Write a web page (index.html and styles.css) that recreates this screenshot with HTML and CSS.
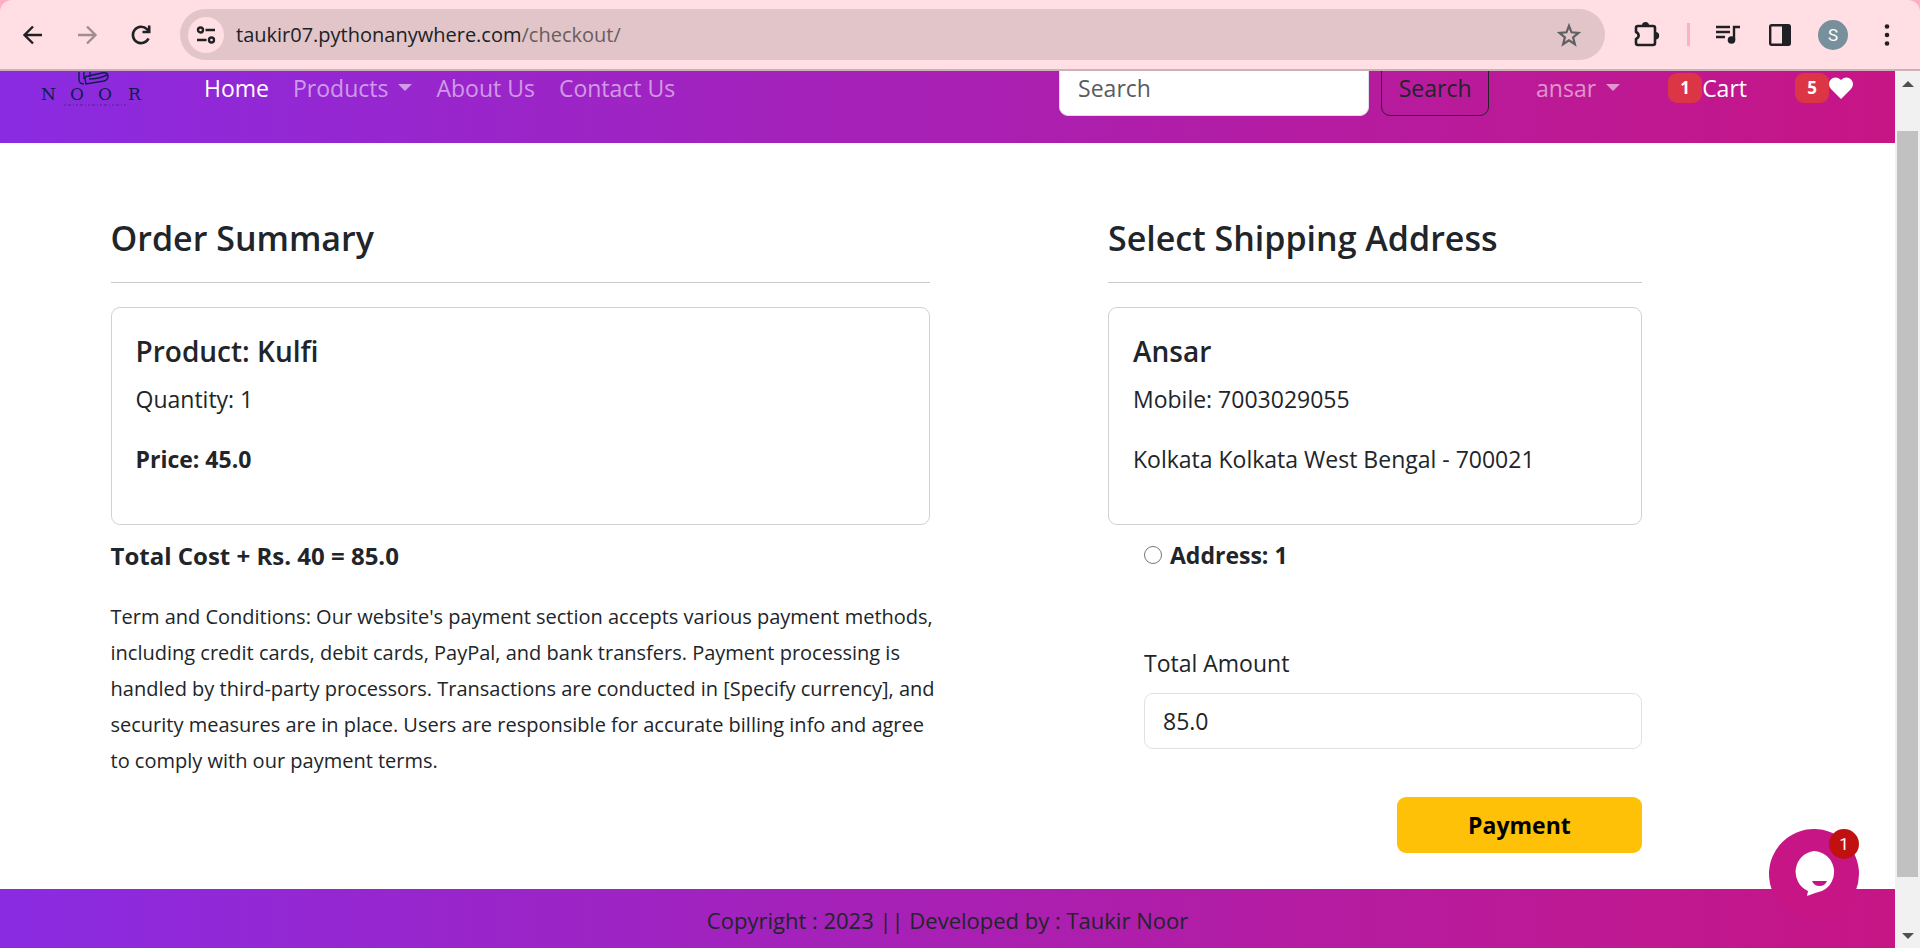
FILE: index.html
```html
<!DOCTYPE html>
<html lang="en">
<head>
<meta charset="utf-8">
<title>Checkout</title>
<link rel="stylesheet" href="styles.css">
</head>
<body>
<div class="browser">
  <header class="toolbar">
    <div class="toolbar-inner">
      <div class="nav-buttons">
        <button class="tool" aria-label="Back"><svg width="24" height="24" viewBox="0 0 24 24" fill="none" stroke="#202124" stroke-width="2.4"><path d="M21 12H4M12 3.500L3.500 12l8.500 8.500"/></svg></button>
        <button class="tool" aria-label="Forward"><svg width="24" height="24" viewBox="0 0 24 24" fill="none" stroke="#a08d92" stroke-width="2.400"><path d="M3 12h17M12 3.500l8.500 8.500-8.500 8.500"/></svg></button>
        <button class="tool" aria-label="Reload"><svg width="24" height="24" viewBox="0 0 24 24" fill="none" stroke="#202124" stroke-width="2.600"><path d="M19.500 15.500A8.200 8.200 0 1 1 18 6.200l2.200 2.600"/><path d="M20.200 2.500V9h-6.700"/></svg></button>
      </div>
      <div class="omnibox">
        <button class="site-info" aria-label="Site information"><svg width="20" height="20" viewBox="0 0 20 20" fill="none" stroke="#202124" stroke-width="2.400"><circle cx="4.500" cy="5" r="2.500"/><path d="M9.500 5H19M1 15h9.500"/><circle cx="15.500" cy="15" r="2.500"/></svg></button>
        <div class="url">taukir07.pythonanywhere.com<span class="path">/checkout/</span></div>
        <button class="tool" aria-label="Bookmark"><svg width="24" height="24" viewBox="0 0 24 24" fill="none" stroke="#5f6063" stroke-width="2.200"><path d="M12 2.800l2.500 6.500 7 .5-5.400 4.500 1.800 6.900L12 17.400l-5.900 3.800 1.800-6.900L2.500 9.800l7-.5z"/></svg></button>
      </div>
      <div class="actions">
        <button class="tool" aria-label="Extensions"><svg width="28" height="28" viewBox="0 0 28 28"><path d="M3 7q0-2 2-2h15q2 0 2 2v15q0 2-2 2H5q-2 0-2-2v-4c3.500-1.500 3.500-5.500 0-7z" fill="none" stroke="#202124" stroke-width="2.600" stroke-linejoin="round"/><path d="M9 4.500a3.500 3.500 0 0 1 7 0zM22.500 11a3.700 3.700 0 0 1 0 7.400z" fill="#202124"/></svg></button>
        <span class="divider"></span>
        <button class="tool" aria-label="Media"><svg width="26" height="24" viewBox="0 0 26 24" fill="none" stroke="#202124" stroke-width="2.400"><path d="M0 4h14M0 9h14M0 14h9M24 4h-6v13"/><circle cx="15.500" cy="17" r="3.800" fill="#202124" stroke="none"/></svg></button>
        <button class="tool" aria-label="Side panel"><svg width="24" height="24" viewBox="0 0 24 24"><rect x="2.200" y="2.200" width="19.600" height="19.600" rx="1.500" fill="none" stroke="#202124" stroke-width="2.400"/><path d="M14 2h8v20h-8z" fill="#202124"/></svg></button>
        <button class="avatar">S</button>
        <button class="tool" aria-label="Menu"><svg width="6" height="24" viewBox="0 0 6 24" fill="#202124"><circle cx="3" cy="3.500" r="2.300"/><circle cx="3" cy="12" r="2.300"/><circle cx="3" cy="20.500" r="2.300"/></svg></button>
      </div>
    </div>
  </header>
  <div class="viewport">
    <div class="page">
      <nav class="navbar">
        <a class="brand" href="#" aria-label="Noor">
          <svg width="120" height="40" viewBox="0 0 120 40">
            <path d="M43 -2v9q0 5 5 5M48 -2v9M54 -2v7M49 7q0-3 3-3l14-3q6-1 6 3t-4 5l-18 3zM53 7q10 0 18-4" fill="none" stroke="#0b1f4d" stroke-width="1.400"/>
            <text class="logo-name" x="5 34 62 92" y="28">NOOR</text>
            <path d="M28 33h62" stroke="#0b1f4d" stroke-opacity=".5" stroke-dasharray="2 2 3 2 1 2"/>
          </svg>
        </a>
        <ul class="links">
          <li><a class="active" href="#">Home</a></li>
          <li><a class="caret" href="#">Products</a></li>
          <li><a href="#">About Us</a></li>
          <li><a href="#">Contact Us</a></li>
        </ul>
        <form class="search">
          <input type="search" placeholder="Search" aria-label="Search">
          <button type="button">Search</button>
        </form>
        <ul class="account">
          <li><a class="caret" href="#">ansar</a></li>
          <li><a class="active" href="#"><span class="count">1</span>Cart</a></li>
          <li><a class="active" href="#" aria-label="Wishlist"><span class="count">5</span><svg width="24" height="22" viewBox="0 0 24 22" fill="#fff"><path d="M12 22L2 12C-4 5 5-4 12 3 19-4 28 5 22 12z"/></svg></a></li>
        </ul>
      </nav>
      <main class="checkout">
        <section class="summary">
          <h1>Order Summary</h1>
          <hr>
          <div class="card">
            <h2>Product: Kulfi</h2>
            <p>Quantity: 1</p>
            <p><strong>Price: 45.0</strong></p>
          </div>
          <p class="total">Total Cost + Rs. 40 = 85.0</p>
          <p class="terms">Term and Conditions: Our website's payment section accepts various payment methods, including credit cards, debit cards, PayPal, and bank transfers. Payment processing is handled by third-party processors. Transactions are conducted in [Specify currency], and security measures are in place. Users are responsible for accurate billing info and agree to comply with our payment terms.</p>
        </section>
        <section class="shipping">
          <h1>Select Shipping Address</h1>
          <hr>
          <form>
            <div class="card">
              <h2>Ansar</h2>
              <p>Mobile: 7003029055</p>
              <p>Kolkata Kolkata West Bengal - 700021</p>
            </div>
            <div class="fields">
              <div class="choice"><input type="radio" id="address" name="address"><label for="address">Address: 1</label></div>
              <label class="amount-label" for="amount">Total Amount</label>
              <input class="amount" id="amount" type="text" value="85.0">
              <button class="pay" type="button">Payment</button>
            </div>
          </form>
        </section>
      </main>
      <footer class="footer">Copyright : 2023 || Developed by : Taukir Noor</footer>
      <button class="chat" aria-label="Open chat">
        <svg width="44" height="48" viewBox="0 0 44 48"><path d="M22 1a21 21 0 0 1 8 40q-8 2-15 5l1-5A21 21 0 0 1 22 1z" fill="#fff"/><path d="M20 31h15q-2 5-7.500 5T20 31z" fill="#c71585"/></svg>
        <span class="chat-count">1</span>
      </button>
    </div>
    <div class="scrollbar"><span class="arrow-up"></span><span class="thumb"></span><span class="arrow-down"></span></div>
  </div>
</div>
</body>
</html>
```
FILE: styles.css
```css
* { box-sizing: border-box; }
body { margin: 0; font: 23px/36px "Open Sans", "Noto Sans", sans-serif; color: #212529; background: #fff; }
button, input { font: inherit; color: inherit; }
button { border: 0; padding: 0; background: none; }
a { color: inherit; text-decoration: none; }
ul { display: flex; list-style: none; margin: 0; padding: 0; }
svg { display: block; flex: none; }

/* Browser toolbar */
.browser { display: flex; flex-direction: column; min-height: 100vh; }
.toolbar { flex: none; background: #ffb0c0; }
.toolbar-inner { display: flex; align-items: center; height: 71px; padding: 0 30px 0 21px; background: #ffdfe4; border-bottom: 2px solid #cbb2ba; border-radius: 12px 12px 0 0; }
.nav-buttons { display: flex; gap: 30px; margin-right: 27px; }
.omnibox { flex: 1; display: flex; align-items: center; height: 51px; padding: 0 24px 0 8px; border-radius: 26px; background: #e1c5c9; }
.site-info { display: grid; place-items: center; width: 36px; height: 36px; border-radius: 50%; background: #ffdfe4; margin-right: 12px; }
.url { flex: 1; font-size: 20px; color: #202124; }
.path { color: #6a5d60; }
.actions { display: flex; align-items: center; margin-left: 28px; gap: 26px; }
.divider { width: 3px; height: 23px; background: #ffb0c0; }
.avatar { width: 30px; height: 30px; margin-right: 10px; border-radius: 50%; background: #78909c; color: #fff; font: 17px/30px Roboto, sans-serif; }
.viewport { flex: 1; display: flex; }
.page { flex: 1; display: flex; flex-direction: column; position: relative; overflow: hidden; }

/* Site navigation */
.navbar, .footer { background: linear-gradient(to right, #8a2be2, #c71585); }
.navbar { display: flex; align-items: flex-end; height: 72px; padding: 0 42px 27px 36px; overflow: hidden; color: #fff; }
.brand { margin-right: 48px; }
.brand svg { margin-bottom: 4px; }
.logo-name { font: 17px "DejaVu Serif", serif; fill: #0b1f4d; }
.navbar li { display: flex; align-items: center; height: 56px; }
.navbar a { color: rgba(255, 255, 255, .55); }
.navbar a.active { display: flex; align-items: center; color: #fff; }
.links { gap: 24px; margin-right: auto; }
.caret::after { content: ""; display: inline-block; margin-left: 10px; vertical-align: 6px; border: 7px solid transparent; border-top-color: currentColor; border-bottom: 0; }
.search { display: flex; gap: 12px; }
.search input { width: 310px; height: 56px; border: 1px solid #dee2e6; border-radius: 9px; padding: 0 18px; background: #fff; }
.search input::placeholder { color: #595c5f; opacity: 1; }
.search button { width: 108px; height: 56px; border: 1px solid #212529; border-radius: 9px; color: #212529; }
.account { gap: 48px; margin-left: 47px; }
.count { display: inline-block; width: 34px; height: 30px; border-radius: 9px; background: #dc3545; font-size: 17px; line-height: 30px; font-weight: 700; text-align: center; }

/* Checkout */
.checkout { flex: 1; display: flex; width: 100%; max-width: 1710px; margin: 0 auto; padding-top: 73px; }
.summary { width: 50%; padding: 0 18px; }
.shipping { width: 33.333%; margin-left: 8.333%; padding: 0 18px; }
h1 { margin: 0; font-size: 34px; line-height: 44px; font-weight: 600; }
hr { height: 1px; margin: 22px 0 24px; border: 0; background: #c8c9ca; }
.card { min-height: 218px; padding: 25px 24px 0; border: 1px solid #d0d1d2; border-radius: 9px; }
h2 { margin: 0 0 12px; font-size: 28px; line-height: 36px; font-weight: 600; }
p { margin: 0 0 24px; }
.total { margin: 13px 0 25px; font-size: 24px; font-weight: 700; }
.terms { margin-right: -8px; font-size: 20px; }
.fields { display: flex; flex-direction: column; padding-left: 36px; }
.choice { display: flex; align-items: center; gap: 8px; margin: 12px 0 72px; font-weight: 700; }
.choice input { width: 18px; height: 18px; margin: 0; }
.amount-label { margin-bottom: 12px; }
.amount { width: 100%; height: 56px; padding: 0 18px; border: 1px solid #dee2e6; border-radius: 9px; }
.pay { align-self: flex-end; width: 245px; height: 56px; margin-top: 48px; border-radius: 9px; background: #ffc107; color: #000; font-weight: 700; }
.footer { height: 59px; padding-top: 13px; font-size: 22px; text-align: center; }

/* Chat launcher */
.chat { position: absolute; right: 36px; bottom: 29px; display: grid; place-items: center; width: 90px; height: 90px; border-radius: 50%; background: #c71585; }
.chat-count { position: absolute; top: 0; right: 0; width: 30px; height: 30px; border-radius: 50%; background: #c01010; color: #fff; font: 17px/30px Roboto, sans-serif; }

/* Page scrollbar */
.scrollbar { flex: none; display: flex; flex-direction: column; align-items: center; width: 25px; padding: 10px 0 9px; background: #f1f1f1; }
.arrow-up { border: 6px solid transparent; border-bottom-color: #505050; border-top: 0; margin-bottom: 44px; }
.thumb { flex: 1; width: 21px; margin-bottom: 56px; background: #c1c1c1; }
.arrow-down { border: 6px solid transparent; border-top-color: #505050; border-bottom: 0; }
```
